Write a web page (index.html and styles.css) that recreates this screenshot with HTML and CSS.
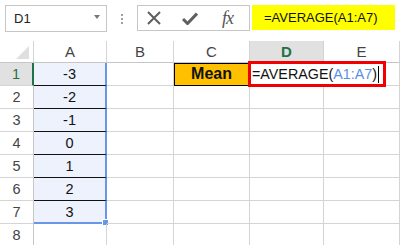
FILE: index.html
```html
<!DOCTYPE html>
<html lang="en">
<head>
    <meta charset="UTF-8">
    <title>AVERAGE</title>
    <link rel="stylesheet" href="styles.css">
</head>
<body>
    <div class="toolbar">
        <div class="name-box">
            <span>D1</span>
            <span class="arrow"></span>
        </div>
        <div class="dots">
            <span></span><span></span><span></span>
        </div>
        <div class="fx-box">
            <svg class="icon-x" width="14" height="14" viewBox="0 0 14 14">
                <path d="M1 1 L13 13 M13 1 L1 13" stroke="#5f5f5f" stroke-width="2" fill="none"/>
            </svg>
            <svg class="icon-ok" width="16" height="13" viewBox="0 0 16 13">
                <path d="M1 7 L5.5 11.5 L15 1.5" stroke="#5f5f5f" stroke-width="3" fill="none"/>
            </svg>
            <span class="fx">fx</span>
        </div>
        <div class="formula">=AVERAGE(A1:A7)</div>
    </div>

    <div class="sheet">
        <div class="corner"><span class="tri"></span></div>
        <div class="col-head">A</div>
        <div class="col-head">B</div>
        <div class="col-head">C</div>
        <div class="col-head active">D</div>
        <div class="col-head">E</div>

        <div class="row-head active">1</div>
        <div class="cell sel">-3</div>
        <div class="cell"></div>
        <div class="cell mean">Mean</div>
        <div class="cell edit">
            <div class="edit-box">=AVERAGE(<span class="ref">A1:A7</span>)<span class="caret"></span></div>
        </div>
        <div class="cell"></div>

        <div class="row-head">2</div>
        <div class="cell sel">-2</div>
        <div class="cell"></div><div class="cell"></div><div class="cell"></div><div class="cell"></div>

        <div class="row-head">3</div>
        <div class="cell sel">-1</div>
        <div class="cell"></div><div class="cell"></div><div class="cell"></div><div class="cell"></div>

        <div class="row-head">4</div>
        <div class="cell sel">0</div>
        <div class="cell"></div><div class="cell"></div><div class="cell"></div><div class="cell"></div>

        <div class="row-head">5</div>
        <div class="cell sel">1</div>
        <div class="cell"></div><div class="cell"></div><div class="cell"></div><div class="cell"></div>

        <div class="row-head">6</div>
        <div class="cell sel">2</div>
        <div class="cell"></div><div class="cell"></div><div class="cell"></div><div class="cell"></div>

        <div class="row-head">7</div>
        <div class="cell sel last">3<span class="handle"></span></div>
        <div class="cell"></div><div class="cell"></div><div class="cell"></div><div class="cell"></div>

        <div class="row-head">8</div>
        <div class="cell"></div><div class="cell"></div><div class="cell"></div><div class="cell"></div><div class="cell"></div>
    </div>
</body>
</html>
```

FILE: styles.css
```css
* {
    margin: 0;
    padding: 0;
    box-sizing: border-box;
}

body {
    width: 400px;
    height: 245px;
    overflow: hidden;
    background: white;
    font-family: 'Liberation Sans', Arial, sans-serif;
    color: #222;
}

/* formula bar */
.toolbar {
    display: flex;
    align-items: flex-start;
    height: 41px;
    padding: 5px 0 0 5px;
}

.name-box {
    width: 102px;
    height: 27px;
    border: 1px solid #c6c6c6;
    display: flex;
    align-items: center;
    justify-content: space-between;
    padding: 0 6px 0 8px;
    font-size: 13px;
    color: #222;
}

.arrow {
    width: 0;
    height: 0;
    border-left: 3px solid transparent;
    border-right: 3px solid transparent;
    border-top: 4px solid #777;
    margin-bottom: 4px;
}

.dots {
    width: 30px;
    display: flex;
    flex-direction: column;
    align-items: center;
    gap: 2px;
    padding-top: 9px;
}

.dots span {
    width: 2px;
    height: 2px;
    background: #a0a0a0;
}

.fx-box {
    width: 113px;
    height: 26px;
    border: 1px solid #c6c6c6;
    display: flex;
    align-items: center;
    padding-left: 9px;
}

.icon-ok {
    margin-left: 21px;
}

.fx {
    margin-left: 24px;
    font-family: 'Liberation Serif', serif;
    font-style: italic;
    font-size: 18px;
    color: #555;
    line-height: 1;
    letter-spacing: -1px;
}

.formula {
    width: 143px;
    height: 25px;
    margin-left: 2px;
    background: #ffff00;
    font-size: 13px;
    line-height: 25px;
    padding-left: 12px;
    color: #111;
}

/* sheet grid */
.sheet {
    display: grid;
    grid-template-columns: 34px 73px 67px 76px 74px 76px;
    grid-template-rows: 22px;
    grid-auto-rows: 23px;
}

.corner {
    position: relative;
    border-right: 1px solid #d4d4d4;
    border-bottom: 1px solid #c6c6c6;
}

.tri {
    position: absolute;
    right: 4px;
    bottom: 3px;
    width: 0;
    height: 0;
    border-left: 13px solid transparent;
    border-bottom: 13px solid #dfdfdf;
}

.col-head {
    border-right: 1px solid #d4d4d4;
    border-bottom: 1px solid #c6c6c6;
    text-align: center;
    font-size: 15px;
    line-height: 22px;
    color: #444;
}

.col-head.active {
    background: #e1e1e1;
    color: #217346;
    font-weight: bold;
}

.row-head {
    border-right: 1px solid #c6c6c6;
    border-bottom: 1px solid #d4d4d4;
    text-align: center;
    font-size: 14.5px;
    line-height: 22px;
    color: #444;
}

.row-head.active {
    background: #e1e1e1;
    color: #217346;
    border-right: 2px solid #217346;
}

.cell {
    position: relative;
    border-right: 1px solid #d4d4d4;
    border-bottom: 1px solid #d4d4d4;
    font-size: 14.5px;
    line-height: 22px;
    text-align: center;
}

.cell.sel {
    background: #eef2fc;
    border-right: 2px solid #6a96e8;
    border-bottom: 1px solid #111;
    color: #111;
}

.cell.sel.last {
    border-bottom: 2px solid #6a96e8;
}

.handle {
    position: absolute;
    right: -4px;
    bottom: -4px;
    width: 5px;
    height: 5px;
    background: #6a96e8;
    border: 1px solid white;
    box-sizing: content-box;
}

.cell.mean {
    background: #ffc000;
    outline: 1px solid #000;
    outline-offset: -1px;
    font-weight: bold;
    font-size: 16px;
    color: #111;
}

.edit-box {
    position: absolute;
    left: -2px;
    top: -2px;
    width: 138px;
    height: 26px;
    border: 3px solid #f00000;
    background: white;
    z-index: 2;
    text-align: left;
    padding-left: 1px;
    font-size: 14.3px;
    line-height: 20px;
    color: #111;
    white-space: nowrap;
}

.ref {
    color: #5b8ee6;
}

.caret {
    display: inline-block;
    width: 1px;
    height: 17px;
    background: #000;
    margin-left: 1px;
    vertical-align: -4px;
}
```
